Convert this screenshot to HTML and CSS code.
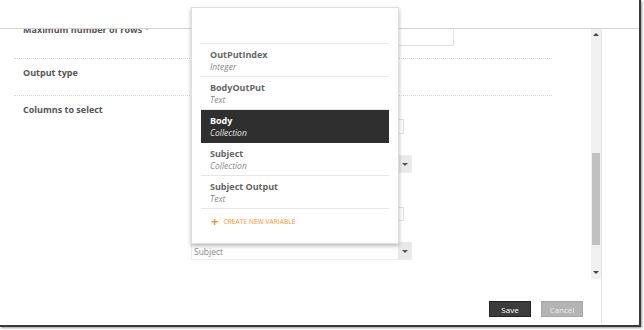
FILE: index.html
```html
<!DOCTYPE html>
<html>
<head>
<meta charset="utf-8">
<link rel="stylesheet" href="styles.css">
</head>
<body>
<div class="window">
  <div class="header"></div>
  <div class="main">
    <div class="left">
      <div class="scrollrow">
        <div class="content">
          <div class="inner">
            <div class="row row1">
              <div class="label">Maximum number of rows <span class="req">*</span></div>
              <div class="controls"><div class="input wide"></div></div>
            </div>
            <div class="row row2">
              <div class="label">Output type</div>
              <div class="controls"></div>
            </div>
            <div class="row row3">
              <div class="label">Columns to select</div>
              <div class="controls stack">
                <div class="input c1"></div>
                <div class="select c2"><span class="val"></span><span class="arrow"></span></div>
                <div class="input c3"></div>
                <div class="select c4"><span class="val">Subject</span><span class="arrow"></span></div>
              </div>
            </div>
          </div>
        </div>
        <div class="scrollbar">
          <div class="sb-up"></div>
          <div class="sb-track"><div class="sb-thumb"></div></div>
          <div class="sb-down"></div>
        </div>
      </div>
      <div class="footer">
        <button class="btn save">Save</button>
        <button class="btn cancel">Cancel</button>
      </div>
    </div>
    <div class="gutter"></div>
  </div>

  <div class="popup">
    <div class="popup-top"></div>
    <div class="item"><div class="name">OutPutIndex</div><div class="type">Integer</div></div>
    <div class="item"><div class="name">BodyOutPut</div><div class="type">Text</div></div>
    <div class="item selected"><div class="name">Body</div><div class="type">Collection</div></div>
    <div class="item"><div class="name">Subject</div><div class="type">Collection</div></div>
    <div class="item"><div class="name">Subject Output</div><div class="type">Text</div></div>
    <div class="create"><span class="plus">+</span>CREATE NEW VARIABLE</div>
  </div>
</div>
</body>
</html>
```
FILE: styles.css
```css
* { box-sizing: border-box; }
html, body { margin: 0; padding: 0; background: #fff; }
body {
  font-family: "Open Sans", "Noto Sans", sans-serif;
  width: 644px; height: 330px; overflow: hidden;
}
.window {
  position: relative;
  width: 641px; height: 327px;
  border-right: 2px solid #3a3a3a;
  border-bottom: 2px solid #3a3a3a;
  box-shadow: 1px 1px 2px #999;
  display: flex; flex-direction: column;
  background: #fff;
}
.header {
  height: 29px;
  border-bottom: 1px solid #d4d4d4;
  flex: none;
  position: relative;
  z-index: 2;
  background: #fff;
}
.main { flex: 1; display: flex; min-height: 0; }
.left { width: 601px; display: flex; flex-direction: column; }
.gutter { flex: 1; border-left: 1px solid #e6e6e6; }
.scrollrow { height: 250px; display: flex; flex: none; }
.content { width: 591px; overflow: hidden; }
.inner { margin-top: -13px; }
.row {
  display: flex;
  margin: 0 39px 0 14px;
  border-bottom: 1px dotted #d6d6d6;
}
.label {
  width: 177px; padding-left: 9px;
  font-size: 9px; font-weight: 700; color: #555;
  line-height: 12px;
}
.req { color: #d9534f; font-weight: 400; }
.controls { flex: 1; }
.row1 { height: 43px; padding-top: 8px; }
.row1 .controls { padding-top: 2px; }
.input { border: 1px solid #e2e2e2; background: #fff; }
.input.wide { width: 263px; height: 22px; margin-top: -2px; }
.row2 { height: 37px; padding-top: 8px; }
.row3 { height: 200px; padding-top: 8px; }
.stack { display: flex; flex-direction: column; padding-top: 15px; }
.c1 { width: 213px; height: 15px; }
.c2 { margin-top: 21px; }
.c3 { width: 213px; height: 14px; margin-top: 34px; }
.c4 { margin-top: 21px; }
.select {
  width: 221px; height: 18px;
  border: 1px solid #ececec;
  display: flex; align-items: center;
  background: #fff;
}
.select .val { flex: 1; font-size: 8.5px; color: #888; padding-left: 2px; }
.select .arrow {
  width: 13px; height: 100%; background: #e9e9e9;
  position: relative;
}
.select .arrow::after {
  content: ""; position: absolute; left: 4px; top: 7px;
  border-left: 3px solid transparent; border-right: 3px solid transparent;
  border-top: 3px solid #555;
}
.scrollbar {
  width: 10px; background: #f0f0f0;
  display: flex; flex-direction: column;
}
.sb-up, .sb-down { height: 11px; position: relative; flex: none; }
.sb-up::after {
  content: ""; position: absolute; left: 2px; top: 4px;
  border-left: 3px solid transparent; border-right: 3px solid transparent;
  border-bottom: 3px solid #444;
}
.sb-down::after {
  content: ""; position: absolute; left: 2px; top: 3px;
  border-left: 3px solid transparent; border-right: 3px solid transparent;
  border-top: 3px solid #444;
}
.sb-track { flex: 1; padding: 113px 1px 0 1px; }
.sb-thumb { height: 92px; background: #c1c1c1; }
.footer {
  flex: 1;
  display: flex; justify-content: flex-end; align-items: flex-start;
  gap: 10px;
  padding: 22px 18px 0 0;
}
.btn {
  height: 16px; padding: 0;
  font-family: "Open Sans", sans-serif; font-size: 8px;
  border: 1px solid #222;
}
.save { width: 42px; background: #3c3c3c; color: #fff; }
.cancel { width: 42px; background: #b4b4b4; color: #ececec; border-color: #a8a8a8; }

.popup {
  position: absolute; left: 191px; top: 7px;
  width: 208px; height: 237px;
  background: #fff;
  border: 1px solid #dedede;
  box-shadow: 0 2px 4px rgba(0,0,0,0.28);
  padding: 0 9px;
  z-index: 5;
}
.popup-top { height: 36px; border-bottom: 1px solid #e6e6e6; }
.item {
  height: 33px; border-bottom: 1px solid #e6e6e6;
  padding: 5px 0 0 9px;
}
.item .name { font-size: 9px; font-weight: 700; color: #666; line-height: 12px; }
.item .type { font-size: 8.5px; font-style: italic; color: #888; line-height: 11px; }
.item.selected { background: #2f2f2f; border-bottom-color: #2f2f2f; }
.item.selected .name { color: #fff; }
.item.selected .type { color: #e6e6e6; }
.create {
  padding: 7px 0 0 10px;
  font-size: 6.5px; color: #f7931e; letter-spacing: 0.1px;
  display: flex; align-items: center;
}
.plus { font-size: 13px; font-weight: 700; margin-right: 5px; line-height: 10px; }
```
